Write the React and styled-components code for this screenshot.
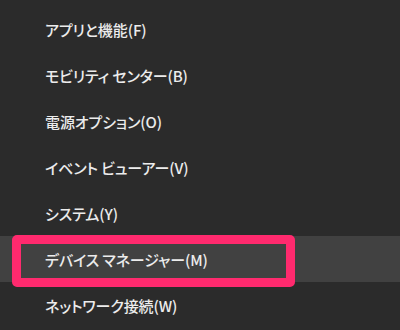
import styled, { createGlobalStyle } from "styled-components"

const Global = createGlobalStyle`
    html, body {
        margin: 0;
        padding: 0;
        background: #2b2b2b;
    }
`

const Menu = styled.div`
    width: 400px;
    height: 330px;
    background-color: #2b2b2b;
    padding-top: 6px;
    box-sizing: border-box;
    overflow: hidden;
    display: flex;
    flex-direction: column;
`

const Item = styled.div`
    position: relative;
    height: 46px;
    flex-shrink: 0;
    display: flex;
    align-items: center;
    padding-left: 45px;
    background-color: ${props => props.active ? '#414141' : 'transparent'};
    color: #ececec;
    font-family: "Noto Sans CJK JP", "Noto Sans", sans-serif;
    font-size: 15px;
    font-weight: 500;
    font-feature-settings: "palt";
    letter-spacing: -0.1px;
    white-space: pre;
`

const Highlight = styled.div`
    position: absolute;
    left: 12px;
    top: -1px;
    width: 283px;
    height: 52px;
    box-sizing: border-box;
    border: 9px solid #ff2a6e;
    border-radius: 5px;
    pointer-events: none;
`

const items = [
    'アプリと機能(F)',
    'モビリティ センター(B)',
    '電源オプション(O)',
    'イベント ビューアー(V)',
    'システム(Y)',
    'デバイス マネージャー(M)',
    'ネットワーク接続(W)',
]

const App = () => {
    return (
        <>
            <Global />
            <Menu>
                {items.map((label, i) => (
                    <Item key={label} active={i === 5}>
                        {label}
                        {i === 5 && <Highlight />}
                    </Item>
                ))}
            </Menu>
        </>
    )
}

export default App
